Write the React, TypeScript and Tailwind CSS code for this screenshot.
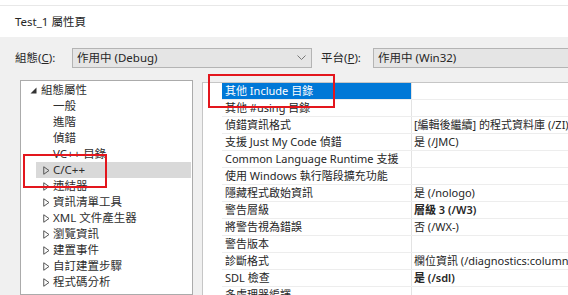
import React from "react";

const Collapsed = () => (
  <svg width="7" height="9" viewBox="0 0 7 9" className="shrink-0">
    <polygon points="0.75,0.75 6,4.5 0.75,8.25" fill="none" stroke="#555" strokeWidth="1" />
  </svg>
);

const Expanded = () => (
  <svg width="7" height="7" viewBox="0 0 7 7" className="shrink-0">
    <polygon points="6.5,0.5 6.5,6.5 0.5,6.5" fill="#333" />
  </svg>
);

const Chevron = () => (
  <svg width="9" height="6" viewBox="0 0 9 6" className="shrink-0">
    <polyline points="0.5,0.5 4.5,4.5 8.5,0.5" fill="none" stroke="#777" strokeWidth="1" />
  </svg>
);

type Child = { label: string; arrow: boolean; selected?: boolean };
const children: Child[] = [
  { label: "一般", arrow: false },
  { label: "進階", arrow: false },
  { label: "偵錯", arrow: false },
  { label: "VC++ 目錄", arrow: false },
  { label: "C/C++", arrow: true, selected: true },
  { label: "連結器", arrow: true },
  { label: "資訊清單工具", arrow: true },
  { label: "XML 文件產生器", arrow: true },
  { label: "瀏覽資訊", arrow: true },
  { label: "建置事件", arrow: true },
  { label: "自訂建置步驟", arrow: true },
  { label: "程式碼分析", arrow: true },
];

type Row = { name: string; value?: string; bold?: boolean; selected?: boolean };
const rows: Row[] = [
  { name: "其他 Include 目錄", selected: true },
  { name: "其他 #using 目錄" },
  { name: "偵錯資訊格式", value: "[編輯後繼續] 的程式資料庫 (/ZI)" },
  { name: "支援 Just My Code 偵錯", value: "是 (/JMC)" },
  { name: "Common Language Runtime 支援" },
  { name: "使用 Windows 執行階段擴充功能" },
  { name: "隱藏程式啟始資訊", value: "是 (/nologo)" },
  { name: "警告層級", value: "層級 3 (/W3)", bold: true },
  { name: "將警告視為錯誤", value: "否 (/WX-)" },
  { name: "警告版本" },
  { name: "診斷格式", value: "欄位資訊 (/diagnostics:column)" },
  { name: "SDL 檢查", value: "是 (/sdl)", bold: true },
  { name: "多處理器編譯" },
];

export default function App() {
  return (
    <div className="relative w-[568px] h-[295px] overflow-hidden bg-white flex flex-col font-['Noto_Sans','Noto_Sans_CJK_TC',sans-serif] text-[#262626]">
      <div className="h-[37px] shrink-0 pt-[5px]">
        <div className="h-full border-t border-[#e8e8e8] pl-[15px] flex items-center text-[11.5px]">
          Test_1 屬性頁
        </div>
      </div>
      <div className="flex-1 min-h-0 bg-[#f0f0f0] flex flex-col">
        <div className="mt-[11px] h-[20px] flex items-center text-[11.5px] whitespace-nowrap shrink-0">
          <div className="pl-[15px] w-[72px] shrink-0">
            組態(<span className="underline">C</span>):
          </div>
          <div className="w-[240px] h-[20px] shrink-0 border border-[#b4b4b4] bg-[#e5e5e5] flex items-center justify-between pl-[4px] pr-[5px]">
            <span>作用中 (Debug)</span>
            <Chevron />
          </div>
          <div className="ml-[9px] w-[52px] shrink-0">
            平台(<span className="underline">P</span>):
          </div>
          <div className="w-[220px] h-[20px] shrink-0 border border-[#b4b4b4] bg-[#e5e5e5] flex items-center pl-[4px]">
            <span>作用中 (Win32)</span>
          </div>
        </div>
        <div className="mt-[12px] flex flex-1 min-h-0">
          <div className="ml-[20px] w-[173px] shrink-0 border border-[#ababab] bg-white pt-[1px] text-[11.5px] text-[#2e2e2e] whitespace-nowrap">
            <div className="h-[16px] flex items-center pl-[9px]">
              <Expanded />
              <span className="ml-[4px] leading-[16px]">組態屬性</span>
            </div>
            <div className="ml-[15px] mr-[1px]">
              {children.map((c) => (
                <div
                  key={c.label}
                  className={`h-[16px] flex items-center pl-[7px] ${c.selected ? "bg-[#d9d9d9]" : ""}`}
                >
                  <div className="w-[10px] shrink-0 flex items-center">{c.arrow ? <Collapsed /> : null}</div>
                  <span className="leading-[16px]">{c.label}</span>
                </div>
              ))}
            </div>
          </div>
          <div className="ml-[9px] mt-[2px] flex-1 min-w-0 border-l border-t border-[#c6c6c6] bg-white pl-[19px] text-[11px] whitespace-nowrap">
            {rows.map((r) => (
              <div key={r.name} className="h-[17px] flex border-b border-[#ededed]">
                <div
                  className={`w-[189px] shrink-0 pl-[3px] leading-[16px] ${r.selected ? "bg-[#0078d7] text-white" : ""}`}
                >
                  {r.name}
                </div>
                <div className={`flex-1 border-l border-[#e3e3e3] pl-[2px] leading-[16px] overflow-hidden ${r.bold ? "font-semibold" : ""}`}>
                  {r.value ?? ""}
                </div>
              </div>
            ))}
          </div>
        </div>
      </div>
      <div className="absolute left-[23px] top-[154px] w-[84px] h-[34px] border-2 border-[#e3161d]" />
      <div className="absolute left-[208px] top-[74px] w-[127px] h-[34px] border-2 border-[#e3161d]" />
    </div>
  );
}
